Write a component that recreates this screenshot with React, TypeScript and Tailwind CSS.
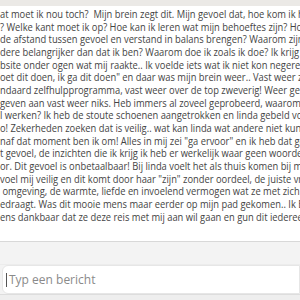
import React from "react";

const lines = [
  "at moet ik nou toch?  Mijn brein zegt dit. Mijn gevoel dat, hoe kom ik hier uit",
  "? Welke kant moet ik op? Hoe kan ik leren wat mijn behoeftes zijn? Hoe",
  "de afstand tussen gevoel en verstand in balans brengen? Waarom zijn",
  "dere belangrijker dan dat ik ben? Waarom doe ik zoals ik doe? Ik krijg een",
  "bsite onder ogen wat mij raakte.. Ik voelde iets wat ik niet kon negeren",
  "oet dit doen, ik ga dit doen\" en daar was mijn brein weer.. Vast weer zo'n",
  "ndaard zelfhulpprogramma, vast weer over de top zweverig! Weer geld",
  "geven aan vast weer niks. Heb immers al zoveel geprobeerd, waarom zou",
  "l werken? Ik heb de stoute schoenen aangetrokken en linda gebeld voor",
  "o! Zekerheden zoeken dat is veilig.. wat kan linda wat andere niet kunnen",
  "naf dat moment ben ik om! Alles in mij zei \"ga ervoor\" en ik heb dat gedaan",
  "t gevoel, de inzichten die ik krijg ik heb er werkelijk waar geen woorden",
  "or. Dit gevoel is onbetaalbaar! Bij linda voelt het als thuis komen bij mijzelf",
  "voel mij veilig en dit komt door haar \"zijn\" zonder oordeel, de juiste vragen",
  " omgeving, de warmte, liefde en invoelend vermogen wat ze met zich",
  "edraagt. Was dit mooie mens maar eerder op mijn pad gekomen.. Ik Ben",
  "ens dankbaar dat ze deze reis met mij aan wil gaan en gun dit iedereen",
];

export default function App() {
  return (
    <div className="w-[300px] h-[300px] overflow-hidden bg-white flex flex-col font-['Open_Sans',sans-serif]">
      <div className="h-[6px] bg-[#ebe9e6] shrink-0" />
      <div className="h-[235px] shrink-0 bg-white pt-[2px] overflow-hidden">
        <div className="origin-left scale-x-[0.835] w-[400px] text-[11.2px] leading-[12.65px] text-[#444444]">
          {lines.map((l, i) => (
            <div key={i} className="whitespace-pre">
              {l}
            </div>
          ))}
        </div>
      </div>
      <div className="h-[24px] shrink-0 border-t border-[#d8d8d8] bg-[#f3f3f3] border-b border-b-[#ececec]" />
      <div className="flex-1 bg-[#f3f3f3] flex">
        <div className="flex-1 ml-[2px] bg-white border border-[#e6e6e6] rounded-l-[6px] flex items-center pl-[3px]">
          <span className="w-px h-[14px] bg-[#555] mr-[2px]" />
          <span className="text-[12px] text-[#8a8a8a] font-['Open_Sans',sans-serif]">Typ een bericht</span>
        </div>
      </div>
      <div className="h-[6px] shrink-0 bg-[#eeeeee] border-t border-[#dddddd]" />
    </div>
  );
}
